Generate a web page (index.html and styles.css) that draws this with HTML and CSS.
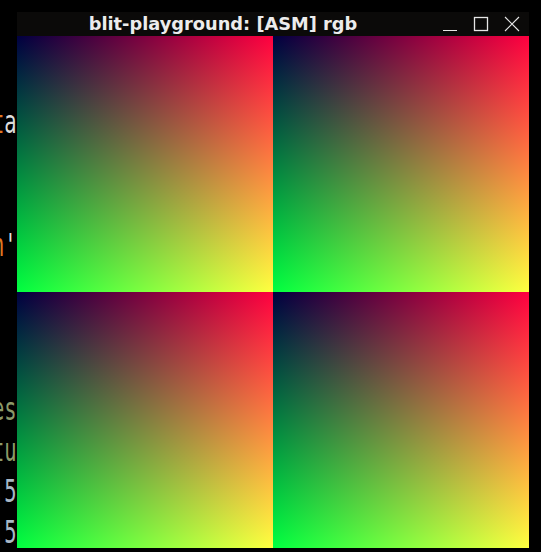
FILE: index.html
```html
<!DOCTYPE html>
<html>
<head>
<meta charset="utf-8">
<title>blit-playground</title>
<link rel="stylesheet" href="styles.css">
</head>
<body>
<div class="desktop">
  <div class="terminal">
    <div class="line"><span class="c-orange">t</span><span class="c-white">a</span></div>
    <div class="line"></div>
    <div class="line"></div>
    <div class="line"><span class="c-orange">n</span><span class="c-white">'</span></div>
    <div class="line"></div>
    <div class="line"></div>
    <div class="line"></div>
    <div class="line"><span class="c-olive">es</span></div>
    <div class="line"><span class="c-olive">tu</span></div>
    <div class="line"><span class="c-orange">.</span><span class="c-blue">5</span></div>
    <div class="line"><span class="c-orange">.</span><span class="c-blue">5</span></div>
  </div>

  <div class="window">
    <div class="titlebar">
      <div class="title">blit-playground: [ASM] rgb</div>
      <div class="controls">
        <div class="btn">
          <svg width="16" height="16" viewBox="0 0 16 16"><line x1="1" y1="14.5" x2="15" y2="14.5" stroke="#e6e6e6" stroke-width="1"/></svg>
        </div>
        <div class="btn">
          <svg width="16" height="16" viewBox="0 0 16 16"><rect x="1.5" y="1.5" width="13" height="13" fill="none" stroke="#e6e6e6" stroke-width="1.3"/></svg>
        </div>
        <div class="btn">
          <svg width="16" height="16" viewBox="0 0 16 16"><path d="M1 1 L15 15 M15 1 L1 15" stroke="#e6e6e6" stroke-width="1.1"/></svg>
        </div>
      </div>
    </div>
    <div class="canvas">
      <div class="tile"></div>
      <div class="tile"></div>
      <div class="tile"></div>
      <div class="tile"></div>
    </div>
  </div>
</div>
</body>
</html>
```

FILE: styles.css
```css
html, body {
  margin: 0;
  padding: 0;
  background: #000;
}

.desktop {
  position: relative;
  width: 541px;
  height: 552px;
  overflow: hidden;
}

.terminal {
  padding-top: 102px;
  width: 17px;
  overflow: hidden;
  font-family: "DejaVu Sans Mono", monospace;
  font-size: 32px;
  line-height: 41px;
}

.line {
  height: 41px;
  display: flex;
  justify-content: flex-end;
  white-space: nowrap;
  transform: scaleX(0.64);
  transform-origin: 16px 0;
}

.c-white { color: #dcdcdc; }
.c-orange { color: #e07820; }
.c-olive { color: #8c9a68; }
.c-blue { color: #a9b8c6; }

.window {
  position: absolute;
  left: 17px;
  top: 12px;
  width: 512px;
}

.titlebar {
  height: 24px;
  background: #0b0a09;
  display: flex;
  align-items: center;
}

.title {
  flex: 1;
  text-align: center;
  color: #ececec;
  font-family: "DejaVu Sans", sans-serif;
  font-weight: bold;
  font-size: 17.8px;
  line-height: 24px;
}

.controls {
  width: 100px;
  display: flex;
  padding-left: 5px;
  box-sizing: border-box;
}

.btn {
  width: 31px;
  height: 24px;
  display: flex;
  align-items: center;
  justify-content: center;
}

.btn svg {
  display: block;
}

.canvas {
  display: grid;
  grid-template-columns: 256px 256px;
  grid-template-rows: 256px 256px;
}

.tile {
  background-color: rgb(0, 0, 64);
  background-image:
    linear-gradient(to right, rgb(0, 0, 0), rgb(255, 0, 0)),
    linear-gradient(to bottom, rgb(0, 0, 0), rgb(0, 255, 0));
  background-blend-mode: lighten;
}
```
